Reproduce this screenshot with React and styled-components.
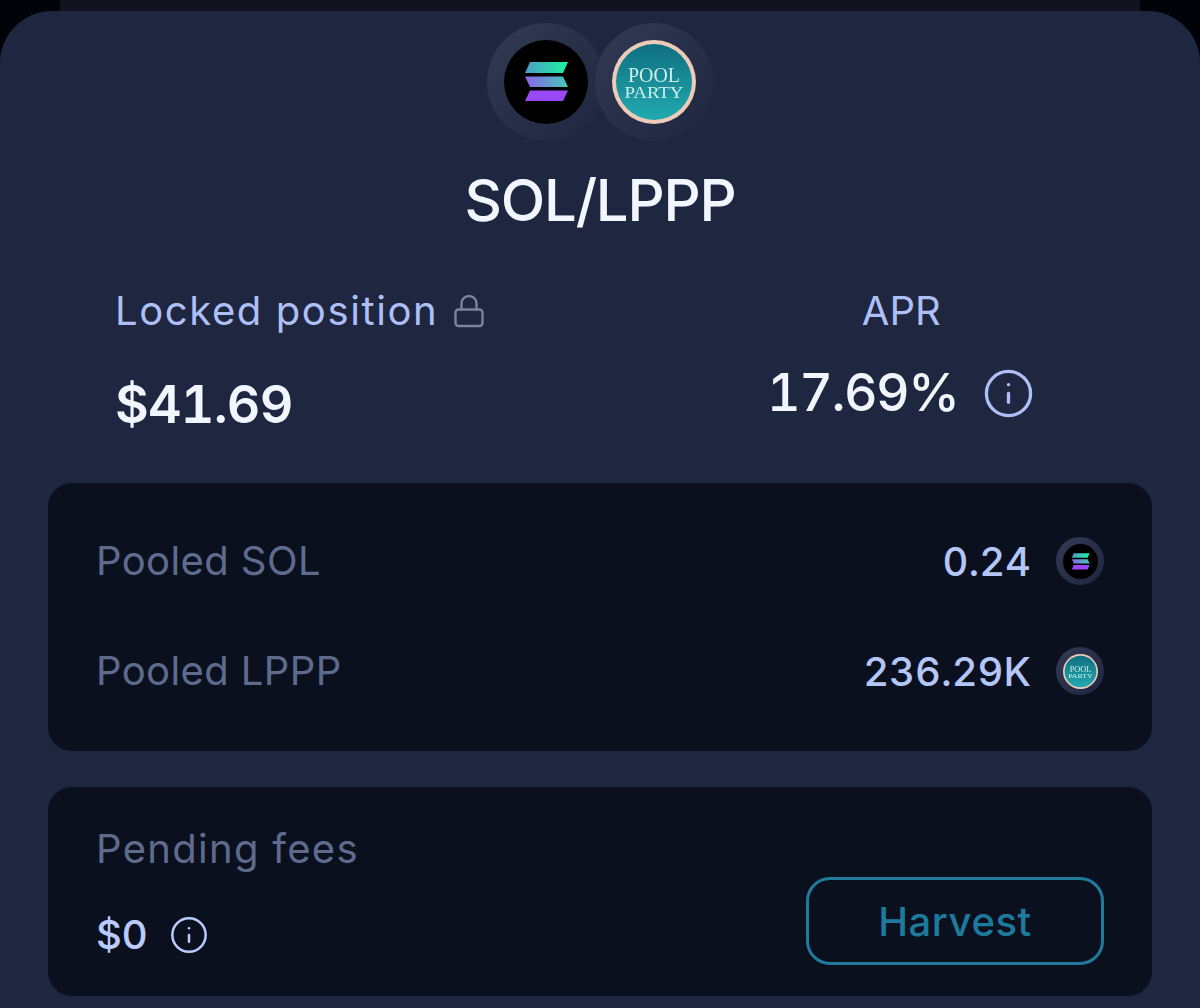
import React from "react";
import styled, { createGlobalStyle } from "styled-components";
import { Info, Lock } from "lucide-react";

const Global = createGlobalStyle`
  html, body { margin: 0; padding: 0; background: #020308; }
  body { font-family: "Inter", "Liberation Sans", sans-serif; overflow: hidden; }
`;

const Screen = styled.div`
  width: 1200px; height: 1008px; overflow: hidden;
  background: #020308;
  display: flex; flex-direction: column;
`;
const TopStrip = styled.div`
  height: 11px; margin: 0 60px; flex-shrink: 0;
  background: #11141f;
`;
const Card = styled.div`
  flex: 1;
  background: #1e2640;
  border-radius: 52px 52px 0 0;
  padding: 12px 48px 0;
  display: flex; flex-direction: column;
`;
const Tokens = styled.div`
  display: flex; justify-content: center;
  & > *:nth-child(2) { margin-left: -10px; }
`;
const Ring = styled.div`
  width: ${(p) => p.$size}px; height: ${(p) => p.$size}px;
  border-radius: 50%;
  background: linear-gradient(135deg, #323a54 0%, #272e48 55%, #1e2640 100%);
  display: flex; align-items: center; justify-content: center;
  flex-shrink: 0;
  & svg { filter: blur(0.4px); }
`;
const Title = styled.h1`
  margin: 19px 0 0;
  text-align: center;
  font-size: 58px; line-height: 80px; font-weight: 500;
  letter-spacing: -1.2px;
  color: #f2f6fe;
`;
const Stats = styled.div`
  display: grid; grid-template-columns: 1fr 1fr;
  margin-top: 44px; padding-left: 67px; height: 199px;
`;
const StatLeft = styled.div`
  display: flex; flex-direction: column; align-items: flex-start;
`;
const StatRight = styled.div`
  display: flex; flex-direction: column; align-items: center;
  padding-left: 17px;
`;
const StatLabel = styled.div`
  display: flex; align-items: center; gap: 13px;
  font-size: 40px; line-height: 54px; font-weight: 400;
  letter-spacing: ${(p) => p.$spacing}px;
  color: #aebff5;
  & svg { color: #7a829c; }
`;
const BigValue = styled.div`
  display: flex; align-items: center; gap: 24px;
  margin-top: ${(p) => p.$top}px;
  font-size: 52px; line-height: 60px; font-weight: ${(p) => p.$weight};
  font-variant-numeric: tabular-nums;
  letter-spacing: ${(p) => p.$spacing}px;
  color: #f0f5fe;
  & svg { color: #aebff5; }
`;
const Panel = styled.div`
  background: #0b101f;
  border-radius: 24px;
  padding: ${(p) => p.$pad};
  height: ${(p) => p.$height}px;
  box-sizing: border-box;
  margin-bottom: 36px;
`;
const Row = styled.div`
  display: flex; align-items: center; justify-content: space-between;
  height: 48px;
  & + & { margin-top: 62px; }
`;
const MutedLabel = styled.div`
  font-size: 40px; line-height: 48px; font-weight: 400;
  letter-spacing: ${(p) => p.$spacing}px;
  color: #5f6b8d;
`;
const RowValue = styled.div`
  display: flex; align-items: center; gap: 25px;
  font-size: 40px; font-weight: 500;
  font-variant-numeric: tabular-nums;
  letter-spacing: 0;
  color: #b4c6f7;
`;
const FeesRow = styled.div`
  display: flex; align-items: flex-end; justify-content: space-between;
`;
const FeesLeft = styled.div`
  display: flex; flex-direction: column; gap: 40px;
`;
const FeesValue = styled.div`
  display: flex; align-items: center; gap: 21px;
  font-size: 40px; line-height: 44px; font-weight: 500;
  color: #b9cbfa;
  & svg { color: #b9cbfa; }
`;
const HarvestButton = styled.button`
  width: 298px; height: 88px;
  margin-bottom: -8px;
  background: transparent;
  border: 3px solid #1f7a9b; border-radius: 24px;
  color: #1d7a9c;
  font-family: inherit; font-size: 40px; font-weight: 500;
  letter-spacing: 0.6px;
  cursor: pointer;
`;

const SolanaLogo = ({ size, id }) => (
  <svg width={size} height={size} viewBox="0 0 84 84">
    <defs>
      <linearGradient id={`${id}-a`} x1="0" x2="1" y1="0" y2="0">
        <stop offset="0" stopColor="#4b9cc6" />
        <stop offset="1" stopColor="#1df2a0" />
      </linearGradient>
      <linearGradient id={`${id}-b`} x1="0" x2="1" y1="0" y2="0">
        <stop offset="0" stopColor="#8d62ec" />
        <stop offset="1" stopColor="#43cbb6" />
      </linearGradient>
    </defs>
    <circle cx="42" cy="42" r="42" fill="#000" />
    <path d="M26 22H64L59 33H21Z" fill={`url(#${id}-a)`} />
    <path d="M21 36.500H59L64 47H26Z" fill={`url(#${id}-b)`} />
    <path d="M26 50.500H64L59 61H21Z" fill="#9a47f6" />
  </svg>
);

const PoolPartyLogo = ({ size, id }) => (
  <svg width={size} height={size} viewBox="0 0 84 84">
    <defs>
      <linearGradient id={id} x1="0" x2="0" y1="0" y2="1">
        <stop offset="0" stopColor="#0f6f80" />
        <stop offset="1" stopColor="#22aab0" />
      </linearGradient>
    </defs>
    <circle cx="42" cy="42" r="42" fill="#ecccb9" />
    <circle cx="42" cy="42" r="38" fill={`url(#${id})`} />
    <text x="42" y="42" textAnchor="middle" fontFamily="Liberation Serif, serif" fontSize="21" textLength="52" lengthAdjust="spacingAndGlyphs" fill="#cdeeea">POOL</text>
    <text x="42" y="58" textAnchor="middle" fontFamily="Liberation Serif, serif" fontSize="17" textLength="59" lengthAdjust="spacingAndGlyphs" fill="#cdeeea">PARTY</text>
  </svg>
);

export default function App() {
  return (
    <Screen>
      <Global />
      <TopStrip />
      <Card>
        <Tokens>
          <Ring $size={118}><SolanaLogo size={84} id="sol-big" /></Ring>
          <Ring $size={118}><PoolPartyLogo size={84} id="pool-big" /></Ring>
        </Tokens>
        <Title>SOL/LPPP</Title>
        <Stats>
          <StatLeft>
            <StatLabel $spacing={1.6}>Locked position <Lock size={36} strokeWidth={1.6} /></StatLabel>
            <BigValue $top={37} $weight={600} $spacing={-0.8}>$41.69</BigValue>
          </StatLeft>
          <StatRight>
            <StatLabel $spacing={0}>APR</StatLabel>
            <BigValue $top={25} $weight={500} $spacing={-1.5}>17.69% <Info size={53} strokeWidth={1.5} /></BigValue>
          </StatRight>
        </Stats>
        <Panel $height={268} $pad="54px 48px 0">
          <Row>
            <MutedLabel $spacing={0.4}>Pooled SOL</MutedLabel>
            <RowValue>0.24 <Ring $size={48}><SolanaLogo size={35} id="sol-small" /></Ring></RowValue>
          </Row>
          <Row>
            <MutedLabel $spacing={0.4}>Pooled LPPP</MutedLabel>
            <RowValue>236.29K <Ring $size={48}><PoolPartyLogo size={35} id="pool-small" /></Ring></RowValue>
          </Row>
        </Panel>
        <Panel $height={209} $pad="38px 48px 0">
          <FeesRow>
            <FeesLeft>
              <MutedLabel $spacing={1.3}>Pending fees</MutedLabel>
              <FeesValue>$0 <Info size={40} strokeWidth={1.5} /></FeesValue>
            </FeesLeft>
            <HarvestButton>Harvest</HarvestButton>
          </FeesRow>
        </Panel>
      </Card>
    </Screen>
  );
}
